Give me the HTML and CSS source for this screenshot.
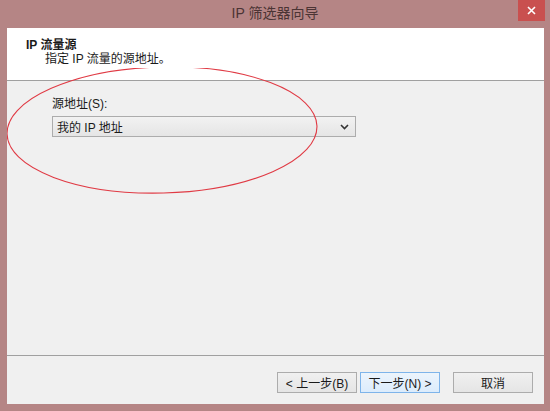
FILE: index.html
```html
<!DOCTYPE html>
<html lang="zh-CN">
<head>
    <meta charset="UTF-8">
    <title>IP 筛选器向导</title>
    <link rel="stylesheet" href="styles.css">
</head>
<body>
<div class="titlebar">
    <span></span>
    <span class="title">IP 筛选器向导</span>
    <button class="close-btn" aria-label="关闭">
        <svg width="9" height="9" viewBox="0 0 9 9"><path d="M1 1L8 8M8 1L1 8" stroke="#fff" stroke-width="1.6"/></svg>
    </button>
</div>

<div class="window">
    <div class="header">
        <div class="header-title">IP 流量源</div>
        <div class="header-sub">指定 IP 流量的源地址。</div>
    </div>

    <div class="content">
        <label class="field-label" for="source">源地址(S):</label>
        <div class="select" id="source">
            <span>我的 IP 地址</span>
            <svg width="9" height="6" viewBox="0 0 9 6"><path d="M1 1L4.5 4.5L8 1" fill="none" stroke="#333" stroke-width="1.6"/></svg>
        </div>

        <!-- hand-drawn marker ring -->
        <svg class="marker" width="330" height="140" viewBox="0 0 330 140">
            <ellipse cx="155" cy="62" rx="155" ry="63" transform="rotate(-1.5 155 62)" fill="none" stroke="#e03a44" stroke-width="1.1"/>
        </svg>
    </div>

    <div class="footer">
        <button class="btn">&lt; 上一步(B)</button>
        <button class="btn btn-default">下一步(N) &gt;</button>
        <button class="btn btn-cancel">取消</button>
    </div>
</div>
</body>
</html>
```

FILE: styles.css
```css
* {
    margin: 0;
    padding: 0;
    box-sizing: border-box;
}
body {
    width: 550px;
    height: 411px;
    background: #b58585;
    font-family: "Liberation Sans", "Noto Sans CJK SC", sans-serif;
    font-size: 12px;
    color: #1a1a1a;
    overflow: hidden;
}
.titlebar {
    height: 28px;
    display: grid;
    grid-template-columns: 1fr auto 1fr;
    align-items: start;
}
.title {
    font-size: 14px;
    line-height: 26px;
    color: #4b3434;
}
.close-btn {
    justify-self: end;
    margin-right: 5px;
    width: 27px;
    height: 21px;
    border: none;
    background: #c9504f;
    display: flex;
    align-items: center;
    justify-content: center;
}
.window {
    margin: 0 6px 0 7px;
    height: 376px;
    background: #f0f0f0;
    display: flex;
    flex-direction: column;
}
.header {
    height: 53px;
    background: #ffffff;
    border-bottom: 1px solid #a0a0a0;
    padding: 10px 0 0 19px;
    line-height: 14px;
}
.header-title {
    font-weight: bold;
}
.header-sub {
    padding-left: 19px;
}
.content {
    position: relative;
    flex: 1;
    padding: 16px 0 0 45px;
    border-bottom: 1px solid #a0a0a0;
}
.field-label {
    display: block;
    line-height: 14px;
    margin-bottom: 5px;
}
.select {
    width: 304px;
    height: 21px;
    border: 1px solid #acacac;
    background: linear-gradient(#f2f2f2, #e5e5e5);
    display: flex;
    align-items: center;
    justify-content: space-between;
    padding: 0 6px 0 4px;
}
.marker {
    position: absolute;
    left: 0;
    top: -13px;
}
.footer {
    height: 48px;
    display: flex;
    justify-content: flex-end;
    align-items: flex-start;
    padding: 16px 11px 0 0;
    gap: 3px;
}
.btn {
    width: 80px;
    height: 21px;
    border: 1px solid #acacac;
    background: linear-gradient(#f0f0f0, #e5e5e5);
    font-family: "Liberation Sans", "Noto Sans CJK SC", sans-serif;
    font-size: 12px;
    color: #1a1a1a;
}
.btn-default {
    border-color: #7eb4ea;
    background: linear-gradient(#ecf4fc, #dcecfc);
}
.btn-cancel {
    margin-left: 10px;
}
```
